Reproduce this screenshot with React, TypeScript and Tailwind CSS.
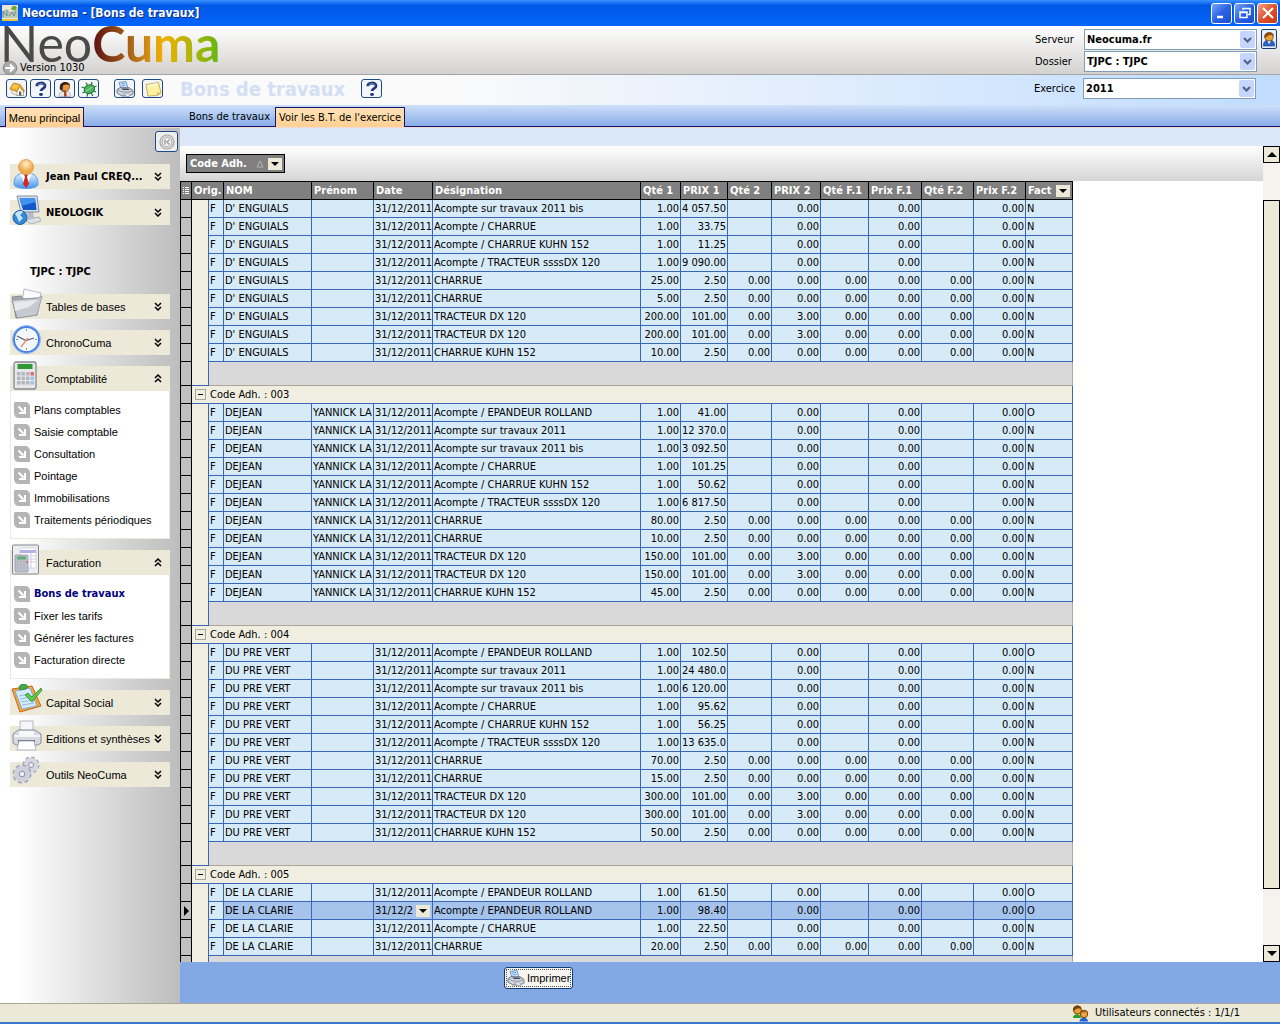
import React from "react";

type Row = {
  name: string;
  first: string;
  label: string;
  qty1: string;
  price1: string;
  second: boolean;
  price2: string;
  billed: string;
  selected?: boolean;
};

const line = (
  name: string,
  first: string,
  label: string,
  qty1: string,
  price1: string,
  second = false,
  price2 = "0.00",
  billed = "N",
): Row => ({ name, first, label, qty1, price1, second, price2, billed });

const member = (name: string, first: string, prices: string[], qty: string[]): Row[] => [
  line(name, first, "Acompte / EPANDEUR ROLLAND", "1.00", prices[0], false, "0.00", "O"),
  line(name, first, "Acompte sur travaux 2011", "1.00", prices[1]),
  line(name, first, "Acompte sur travaux 2011 bis", "1.00", prices[2]),
  line(name, first, "Acompte / CHARRUE", "1.00", prices[3]),
  line(name, first, "Acompte / CHARRUE KUHN 152", "1.00", prices[4]),
  line(name, first, "Acompte / TRACTEUR ssssDX 120", "1.00", prices[5]),
  line(name, first, "CHARRUE", qty[0], "2.50", true),
  line(name, first, "CHARRUE", qty[1], "2.50", true),
  line(name, first, "TRACTEUR DX 120", qty[2], "101.00", true, "3.00"),
  line(name, first, "TRACTEUR DX 120", qty[2], "101.00", true, "3.00"),
  line(name, first, "CHARRUE KUHN 152", qty[3], "2.50", true),
];

const groups: { code?: string; rows: Row[] }[] = [
  {
    rows: member(
      "D' ENGUIALS",
      "",
      ["", "", "4 057.50", "33.75", "11.25", "9 090.00"],
      ["25.00", "5.00", "200.00", "10.00"],
    ).slice(2),
  },
  {
    code: "003",
    rows: member(
      "DEJEAN",
      "YANNICK LA",
      ["41.00", "12 370.0", "3 092.50", "101.25", "50.62", "6 817.50"],
      ["80.00", "10.00", "150.00", "45.00"],
    ),
  },
  {
    code: "004",
    rows: member(
      "DU PRE VERT",
      "",
      ["102.50", "24 480.0", "6 120.00", "95.62", "56.25", "13 635.0"],
      ["70.00", "15.00", "300.00", "50.00"],
    ),
  },
  {
    code: "005",
    rows: [
      line("DE LA CLARIE", "", "Acompte / EPANDEUR ROLLAND", "1.00", "61.50", false, "0.00", "O"),
      {
        ...line("DE LA CLARIE", "", "Acompte / EPANDEUR ROLLAND", "1.00", "98.40", false, "0.00", "O"),
        selected: true,
      },
      line("DE LA CLARIE", "", "Acompte / CHARRUE", "1.00", "22.50"),
      line("DE LA CLARIE", "", "CHARRUE", "20.00", "2.50", true),
    ],
  },
];

/* ---------- Icons ---------- */

const HouseIcon = () => (
  <svg viewBox="0 0 16 16" className="size-4">
    <path d="M7 8l4-4 3.500 5v5.500H8z" fill="#fff" stroke="#8a8a8a" strokeWidth=".7" />
    <path d="M2 8l6 2v4.500L3 12.500z" fill="#eeeae0" stroke="#999" strokeWidth=".6" />
    <path d="M4.500 2L11 3.500 15.500 10l-1.300.6-3.700-5L8 10.500 .8 7.800z" fill="#f3b52c" stroke="#a96a08" strokeWidth=".7" />
    <path d="M3 5.500l5 1.300M4 3.800l5 1.200" stroke="#ffdc78" strokeWidth=".8" />
    <path d="M10 14.500V10.500h2.300v4z" fill="#6d5a48" />
  </svg>
);

const HelpIcon = () => (
  <svg viewBox="0 0 16 16" className="size-4" fill="none">
    <path d="M3.800 5.200C3.800 1 12 1 12 5c0 2.700-4 2.600-4 5" stroke="#1e3874" strokeWidth="2.800" />
    <path d="M4.500 4.500C5.500 1.800 11 2 11 5" stroke="#7f9ad0" strokeWidth=".8" />
    <ellipse cx="8" cy="13.500" rx="2" ry="1.400" fill="#1e3874" />
  </svg>
);

const OperatorIcon = () => (
  <svg viewBox="0 0 16 16" className="size-4">
    <path d="M2 15.500c0-4 2-5.500 6-5.500s5.500 1.500 5.500 5.500z" fill="#e9e6e2" stroke="#999" strokeWidth=".6" />
    <path d="M7.200 10.500h2l.5 5H7z" fill="#b33a1c" />
    <circle cx="8.200" cy="6" r="4.400" fill="#ef9440" stroke="#8a3c0c" strokeWidth=".6" />
    <path d="M3 6.500C2-.5 13.500-.5 13 5 11 3 6 3 5.500 6z" fill="#3a2012" />
    <rect x="2.800" y="5" width="3" height="4" rx="1" fill="#2a2a2a" />
    <path d="M4.500 9c1 1.500 2 1.500 4 1" fill="none" stroke="#333" />
  </svg>
);

const BugIcon = () => (
  <svg viewBox="0 0 16 16" className="size-4">
    <path
      d="M.5 6l4.500 1.500M1.500 12l3.500-2M5 1.500L7 5M11 1l-1 4M15.500 5l-4.500 2M15 11l-3.500-1.500M6 15.500l1-3.500M12 15l-2-3"
      stroke="#237337"
      strokeWidth="1.200"
    />
    <ellipse cx="8.300" cy="8.300" rx="5.300" ry="4.300" fill="#4cb560" stroke="#217336" transform="rotate(-20 8 8)" />
    <path d="M4.500 10.500l7-4.500" stroke="#9be2a6" strokeWidth=".9" />
  </svg>
);

const PrinterIcon = () => (
  <svg viewBox="0 0 18 16" className="h-4 w-[18px]">
    <path d="M3 1.500l7-1 2 7H5z" fill="#cfe6fb" stroke="#4f7fba" strokeWidth=".8" />
    <path d="M5 3l4-.6M5.500 5l4-.6" stroke="#6ba2dd" />
    <path d="M1 8.500l3-1.800h9l4 2.800v3.500l-4 2H6l-5-3z" fill="#d5d8df" stroke="#626b7d" strokeWidth=".9" />
    <path d="M1 8.500l5 2.500h7l4-1.500" fill="none" stroke="#8b93a3" />
    <path d="M5 7.500h7l2 1.500H7z" fill="#3b465c" />
    <path d="M7 13h6l1.500 1.300-3 1.200z" fill="#fff" stroke="#7b8494" strokeWidth=".5" />
  </svg>
);

const NoteIcon = () => (
  <svg viewBox="0 0 18 16" className="h-4 w-[18px]">
    <path d="M2 3.500L14.500 1.500 17 12l-4 2.500-9 .5z" fill="#fff1a0" stroke="#c7a640" strokeWidth=".9" />
    <path d="M17 12l-3.800-.8-.2 3.300z" fill="#d9b952" />
    <path d="M3.500 5L14 3" stroke="#fffbe0" strokeWidth="2" />
  </svg>
);

const PersonIcon = () => (
  <svg viewBox="0 0 16 18" className="h-[18px] w-4">
    <path d="M1.500 17c0-5 2.500-7 6.500-7s6.500 2 6.500 7z" fill="#2d62c9" stroke="#143b8c" strokeWidth=".7" />
    <path d="M6 10.500L8 15l2.500-4.500z" fill="#fff" />
    <circle cx="8" cy="6.500" r="4.700" fill="#f2a233" stroke="#5b3310" strokeWidth=".8" />
    <path d="M2.800 8C1 0 14 -1 13.500 6 10 2.500 7 6 2.800 8z" fill="#8b4c14" />
  </svg>
);

const UsersIcon = () => (
  <svg viewBox="0 0 17 17" className="size-[17px]">
    <path d="M1 13c0-5 8-5 8 0z" fill="#28a028" />
    <circle cx="5.500" cy="5" r="4" fill="#e9a13b" stroke="#764007" />
    <path d="M1 6C0-1 10-1 9 4 6 2 4 4 1 6z" fill="#73430f" />
    <path d="M7.500 16.500c0-5 8.500-5 8.500 0z" fill="#1f62d8" />
    <circle cx="12" cy="9" r="3.700" fill="#f0a43e" stroke="#764007" />
    <path d="M8 9c0-6 8-5 8-1-3-2-5-1-8 1z" fill="#9a5a18" />
  </svg>
);

const AppIcon = () => (
  <svg viewBox="0 0 16 16" className="size-4">
    <path d="M0 0h16v16H0z" fill="#e9e6d6" />
    <path d="M0 6l5-2 4 3 7-3v9H0z" fill="#b9c9b8" />
    <path d="M1 12V6l4 5V5m2 6l3-4 2 4 2-5" stroke="#768b93" fill="none" />
    <path d="M9 4c1-4 5-4 6-1-1 3-4 3-6 1z" fill="#6da43a" />
    <path d="M0 14h16v2H0z" fill="#e7c23c" />
  </svg>
);

const ManIcon = () => (
  <svg viewBox="0 0 30 32" className="h-8 w-[30px]">
    <defs>
      <linearGradient id="man-body" x2="0" y2="1">
        <stop stopColor="#e8f6ff" />
        <stop offset="1" stopColor="#3f93ee" />
      </linearGradient>
      <radialGradient id="man-head" cx=".5" cy=".3">
        <stop stopColor="#fff1c9" />
        <stop offset="1" stopColor="#f0a84b" />
      </radialGradient>
    </defs>
    <path d="M3 26c0-8 4-11 12-11s12 3 12 11c0 6-24 6-24 0z" fill="url(#man-body)" stroke="#5d9bea" />
    <path d="M9 15l6 4 6-4-6 14z" fill="#fff" />
    <path d="M13 16h4l-1 3 2 7-3 4-3-4 2-7z" fill="#d12626" />
    <circle cx="15" cy="9" r="7.500" fill="url(#man-head)" stroke="#e3953c" strokeWidth=".8" />
  </svg>
);

const ComputerIcon = () => (
  <svg viewBox="0 0 30 32" className="h-8 w-[30px]">
    <path d="M14 26l14-3 2 4-10 3z" fill="#dde1e5" stroke="#929aa4" strokeWidth=".7" />
    <path d="M16 17l6 0 1 7-6 1z" fill="#b4bcc5" />
    <path d="M6 2l20 0 2 16-18 0z" fill="#d8e1eb" stroke="#7d8ea4" />
    <path d="M8.500 4l15.500 0 1.600 12-13.600 0z" fill="#1457cb" />
    <path d="M8.500 4l15.500 0 .5 4-14 4z" fill="#4290f0" />
    <circle cx="9" cy="23.500" r="7" fill="#3789d7" stroke="#1e5fa8" />
    <path d="M4 20c3-4 7-3 8-2l-3 3 3 3-4 4-2-5z" fill="#c4e6f8" />
  </svg>
);

const FolderIcon = () => (
  <svg viewBox="0 0 32 32" className="size-8">
    <path d="M13 1l17 4-4 20-16-4z" fill="#fbfcfe" stroke="#a6abb6" strokeWidth=".8" />
    <path d="M1 9l9-1 2 3 15-1-1 17-21 3z" fill="#a5a8b3" stroke="#797d89" strokeWidth=".8" />
    <path d="M1 12l26-2 4-2-5 19-20 3z" fill="#c7cad3" stroke="#8c909c" strokeWidth=".8" />
    <path d="M3 14l24-2-9 7-14 4z" fill="#e7e9ef" />
  </svg>
);

const ClockIcon = () => (
  <svg viewBox="0 0 32 32" className="size-8">
    <circle cx="15.500" cy="15.500" r="12.800" fill="#f3f8ff" stroke="#4a82e4" strokeWidth="2.500" />
    <circle cx="15.500" cy="15.500" r="14" fill="none" stroke="#97bcf6" />
    <path d="M15.500 5v2M15.500 24v2M5 15.500h2M24 15.500h2" stroke="#7996c7" />
    <path d="M6 12l9 4.500 8-2.500" fill="none" stroke="#586579" strokeWidth="1.300" />
    <path d="M17 14l-7 9" stroke="#f08a5e" strokeWidth="1.300" />
  </svg>
);

const Keypad = ({ x, y, s }: { x: number; y: number; s: number }) => (
  <g>
    {[0, 1, 2].map((r) =>
      [0, 1, 2, 3].map((c) => (
        <rect
          key={`${r}${c}`}
          x={x + c * s}
          y={y + r * s}
          width={s - 1}
          height={s - 1}
          rx=".6"
          fill={c === 3 ? (r === 0 ? "#e26a6a" : "#9fc3e4") : "#b3b6bd"}
        />
      )),
    )}
  </g>
);

const CalculatorIcon = () => (
  <svg viewBox="0 0 30 32" className="h-8 w-[30px]">
    <rect x="3" y="2" width="22" height="27" rx="2" fill="#e6e7ea" stroke="#85888f" strokeWidth="1.300" />
    <rect x="6.500" y="4" width="15" height="5" fill="#2f9a35" />
    <Keypad x={6} y={12} s={4.500} />
  </svg>
);

const InvoiceIcon = () => (
  <svg viewBox="0 0 30 32" className="h-8 w-[30px]">
    <rect x="1.500" y="1" width="26" height="29" rx="1" fill="#eeeef2" stroke="#85868d" />
    <path d="M9 4h16v20H9z" fill="#fff" stroke="#c8c8dc" strokeWidth=".7" />
    <path d="M9 6h16v3H9z" fill="#b7b0e4" />
    <path d="M18 12h7M18 15h7M18 18h7M20 9v15" stroke="#cfcfe4" />
    <rect x="4" y="11" width="13" height="17" rx="1" fill="#bdc0cc" stroke="#8b8e9c" strokeWidth=".7" />
    <path d="M6 12.500h9v3H6z" fill="#5fae79" />
    <Keypad x={6} y={17} s={3} />
  </svg>
);

const ClipboardIcon = () => (
  <svg viewBox="0 0 32 32" className="size-8">
    <path d="M1 5l20-3 9 20-21 6z" fill="#f5a540" stroke="#c36b16" />
    <path d="M4 7l15-3 7 18-15 3z" fill="#d5eafa" stroke="#7eadd5" strokeWidth="1" />
    <path d="M8 12l10-2M9 15l11-2M10 18l12-2M11 21l12-2" stroke="#91bce2" />
    <path d="M8 4c0-5 8-5 9-1l-2 2-6 1z" fill="#44a94b" stroke="#257b2b" strokeWidth=".7" />
    <path d="M14 11l3-2 4 4L30 4l1 2-10 12z" fill="#5ac94c" stroke="#2b8d27" strokeWidth=".8" />
  </svg>
);

const BigPrinterIcon = () => (
  <svg viewBox="0 0 32 32" className="size-8">
    <path d="M9 1h13v13H9z" fill="#f4f6fb" stroke="#a4a9b8" strokeWidth=".8" />
    <path d="M2 14l5-4h17l6 4v9l-3 2H5l-3-2z" fill="#d6d8e2" stroke="#8b8e9f" />
    <path d="M8 11h15v4H8z" fill="#f6f8fb" />
    <path d="M3 16h26" stroke="#fff" strokeWidth="1.500" />
    <path d="M7 20h17v3H7z" fill="#686c7d" />
    <path d="M8 21h15l2 9H6z" fill="#fff" stroke="#a2a6b4" strokeWidth=".8" />
  </svg>
);

const GearsIcon = () => (
  <svg viewBox="0 0 32 32" className="size-8" fill="none">
    <circle cx="20" cy="9" r="7" stroke="#a6a7b8" strokeWidth="3" strokeDasharray="3.300 2.200" />
    <circle cx="20" cy="9" r="5" stroke="#d5d6e2" strokeWidth="4.500" />
    <circle cx="20" cy="9" r="2.500" stroke="#8e90a2" fill="#efeff4" />
    <circle cx="11" cy="18" r="8" stroke="#9fa0b2" strokeWidth="3" strokeDasharray="3.800 2.500" />
    <circle cx="11" cy="18" r="5.500" stroke="#cfd0de" strokeWidth="5.500" />
    <circle cx="11" cy="18" r="2.800" stroke="#8e90a2" fill="#efeff4" />
  </svg>
);

const DoubleChevron = ({ up }: { up?: boolean }) => (
  <svg viewBox="0 0 8 9" className="h-[9px] w-2" fill="none" stroke="#000" strokeWidth="1.500">
    {up ? <path d="M1 4l3-3 3 3M1 8l3-3 3 3" /> : <path d="M1 1l3 3 3-3M1 5l3 3 3-3" />}
  </svg>
);

const ItemArrow = () => (
  <svg viewBox="0 0 16 16" className="size-4">
    <path d="M1 0h10c3 0 5 2 5 5v11H5c-3 0-5-2-5-5V1z" fill="#b5b5b5" />
    <path d="M4.500 4.500l5 5M11 5v6H5" stroke="#fff" strokeWidth="2" fill="none" />
  </svg>
);

const DropArrow = () => (
  <span className="flex h-3 w-[14px] shrink-0 items-center justify-center bg-[#ece9d8]">
    <svg viewBox="0 0 8 4" className="h-1 w-2">
      <path d="M0 0h8L4 4z" />
    </svg>
  </span>
);

/* ---------- Window chrome ---------- */

const WindowButton = ({ label, close, children }: { label: string; close?: boolean; children: React.ReactNode }) => (
  <button
    aria-label={label}
    className={`flex size-[21px] items-center justify-center rounded-[3px] border border-white ${
      close ? "bg-linear-to-br from-[#f0a080] via-[#e0502c] to-[#c43c14]" : "bg-linear-to-br from-[#7ba4f4] via-[#2a61e4] to-[#1c4fd0]"
    }`}
  >
    <svg viewBox="0 0 16 16" className="size-4" fill="none" stroke="#fff">
      {children}
    </svg>
  </button>
);

const TitleBar = () => (
  <header className="flex h-[26px] shrink-0 items-center gap-1 bg-linear-to-b from-[#3a93ff] via-[#0058e8] via-20% to-[#0465fb] pr-0.5 pl-0.5 text-white">
    <AppIcon />
    <h1 className="grow text-xs font-bold [text-shadow:1px_1px_#0a2a80]">Neocuma - [Bons de travaux]</h1>
    <div className="flex gap-0.5">
      <WindowButton label="Réduire">
        <path d="M3 12h6" strokeWidth="2.500" />
      </WindowButton>
      <WindowButton label="Restaurer">
        <path d="M6 5V3.500h7v6h-2M3 7h7v5.500H3zM3 7.500h7" strokeWidth="1.500" />
      </WindowButton>
      <WindowButton label="Fermer" close>
        <path d="M3 3l10 10M13 3L3 13" strokeWidth="2" />
      </WindowButton>
    </div>
  </header>
);

const Field = ({ id, label, value }: { id: string; label: string; value: string }) => (
  <div className="flex items-center">
    <label htmlFor={id} className="w-[49px]">
      {label}
    </label>
    <div className="relative">
      <select
        id={id}
        className="block h-[21px] w-[173px] appearance-none border border-[#7f9db9] bg-white pr-5 pl-0.5 font-bold"
        defaultValue={value}
      >
        <option>{value}</option>
      </select>
      <span className="pointer-events-none absolute top-0.5 right-0.5 flex h-[17px] w-[15px] items-center justify-center rounded-xs bg-[#c5d5fb]">
        <svg viewBox="0 0 9 6" className="h-1.5 w-[9px]" fill="none" stroke="#4d6185" strokeWidth="2">
          <path d="M1 1l3.500 3.500L8 1" />
        </svg>
      </span>
    </div>
  </div>
);

const Banner = () => (
  <div className="flex h-[49px] shrink-0 justify-between border-b border-[#a5a5a5] bg-linear-to-b from-white to-[#d4d2d0]">
    <div className="flex flex-col justify-between">
      <p className="font-['Lato'] text-[50px] leading-[35px] whitespace-nowrap">
        <span className="text-[#4a4a4a]">Neo</span>
        <span className="bg-linear-to-r from-[#5a0d10] via-[#f0b000] via-55% to-[#5fb510] bg-clip-text font-bold text-transparent">
          Cuma
        </span>
      </p>
      <p className="flex h-[13px] items-center gap-0.5 pl-0.5">
        <svg viewBox="0 0 16 16" className="size-4" fill="none">
          <circle cx="8" cy="8" r="6.800" fill="#aaa" stroke="#888" />
          <path d="M3.500 8h8M8 4.500L11.500 8 8 11.500" stroke="#fff" strokeWidth="2" />
        </svg>
        Version 1030
      </p>
    </div>
    <div className="flex gap-1 pt-[3px] pr-[3px]">
      <div className="flex flex-col gap-px">
        <Field id="server" label="Serveur" value="Neocuma.fr" />
        <Field id="folder" label="Dossier" value="TJPC : TJPC" />
      </div>
      <button
        aria-label="Utilisateur"
        className="flex h-5 w-4 items-center justify-center overflow-hidden rounded-xs border border-[#1c3c74] bg-[#e3f0fb]"
      >
        <PersonIcon />
      </button>
    </div>
  </div>
);

const ToolButton = ({ label, children }: { label: string; children: React.ReactNode }) => (
  <button
    aria-label={label}
    className="flex h-[19px] w-[21px] items-center justify-center rounded-[3px] border border-[#1d4a86] bg-[#f2f5fa]"
  >
    {children}
  </button>
);

const Toolbar = () => (
  <div className="flex h-[30px] shrink-0 items-center bg-linear-to-r from-[#fafafa] from-35% to-[#bfdcff] pr-6 pb-[3px] pl-1.5">
    <div className="flex w-[174px] gap-[3px]">
      <ToolButton label="Accueil">
        <HouseIcon />
      </ToolButton>
      <ToolButton label="Aide">
        <HelpIcon />
      </ToolButton>
      <ToolButton label="Assistance">
        <OperatorIcon />
      </ToolButton>
      <ToolButton label="Signaler">
        <BugIcon />
      </ToolButton>
      <div className="ml-3 flex gap-[7px]">
        <ToolButton label="Imprimer la page">
          <PrinterIcon />
        </ToolButton>
        <ToolButton label="Notes">
          <NoteIcon />
        </ToolButton>
      </div>
    </div>
    <h2 className="mr-4 text-xl font-bold text-[#d3dff3]">Bons de travaux</h2>
    <div className="grow">
      <ToolButton label="Aide sur la page">
        <HelpIcon />
      </ToolButton>
    </div>
    <Field id="year" label="Exercice" value="2011" />
  </div>
);

const activeTab =
  "h-5 border border-b-0 border-[#14146e] bg-linear-to-b from-[#ffe3b8] to-[#ffcf92] whitespace-nowrap pt-px";

const TabBar = () => (
  <nav className="flex h-[23px] shrink-0 items-end border-b border-[#f3d9d4] bg-linear-to-b from-[#cfe0fa] to-[#86abe6]">
    <span className="h-px w-[5px] bg-[#14146e]" />
    <button className={`${activeTab} w-[79px] font-['Liberation_Sans']`}>Menu principal</button>
    <span className="h-px w-[99px] bg-[#14146e]" />
    <button className="h-5 border-b border-[#14146e] pt-px pr-[5px] pl-1.5 whitespace-nowrap">Bons de travaux</button>
    <button className={`${activeTab} px-[3px]`}>Voir les B.T. de l'exercice</button>
    <span className="h-px grow bg-[#14146e]" />
  </nav>
);

/* ---------- Sidebar ---------- */

const MenuSection = ({
  icon,
  title,
  bold,
  items,
  active,
}: {
  icon: React.ReactNode;
  title: string;
  bold?: boolean;
  items?: string[];
  active?: string;
}) => (
  <section>
    <button
      className={`relative flex h-[25px] w-full items-center bg-[#ece9d8] pr-2 pl-9 text-left ${
        bold ? "font-bold" : "font-['Liberation_Sans']"
      }`}
    >
      <span className="absolute -top-1.5 left-px">{icon}</span>
      <span className="grow whitespace-nowrap">{title}</span>
      <DoubleChevron up={!!items} />
    </button>
    {items && (
      <ul className="border border-t-0 border-[#ece9e4] bg-white pt-2 pb-[7px] pl-[3px]">
        {items.map((item) => (
          <li key={item}>
            <a
              href="#"
              className={`flex h-[22px] items-center gap-1 whitespace-nowrap ${
                item === active ? "font-bold text-[#000080]" : "font-['Liberation_Sans']"
              }`}
            >
              <ItemArrow />
              {item}
            </a>
          </li>
        ))}
      </ul>
    )}
  </section>
);

const Sidebar = () => (
  <aside className="w-[180px] shrink-0 overflow-hidden bg-linear-to-r from-white from-10% to-[#bdbdbd] px-[10px] pt-[3px]">
    <div className="-mr-2 flex justify-end">
      <button
        aria-label="Replier le menu"
        className="flex h-[21px] w-[23px] items-center justify-center rounded-[3px] border border-[#1d4a86] bg-[#eeeeee]"
      >
        <svg viewBox="0 0 16 16" className="size-4" fill="none" stroke="#a2a2a2">
          <circle cx="8" cy="8" r="7" strokeWidth="1.200" />
          <circle cx="8" cy="8" r="5" />
          <path d="M6 5.500v5M10.500 5.500L8 8l2.500 2.500" strokeWidth="1.500" />
        </svg>
      </button>
    </div>
    <div className="mt-3 flex flex-col gap-[11px]">
      <MenuSection icon={<ManIcon />} title="Jean Paul CREQ..." bold />
      <MenuSection icon={<ComputerIcon />} title="NEOLOGIK" bold />
      <p className="flex h-[47px] items-end pb-1 pl-5 font-bold">TJPC : TJPC</p>
      <MenuSection icon={<FolderIcon />} title="Tables de bases" />
      <MenuSection icon={<ClockIcon />} title="ChronoCuma" />
      <MenuSection
        icon={<CalculatorIcon />}
        title="Comptabilité"
        items={[
          "Plans comptables",
          "Saisie comptable",
          "Consultation",
          "Pointage",
          "Immobilisations",
          "Traitements périodiques",
        ]}
      />
      <MenuSection
        icon={<InvoiceIcon />}
        title="Facturation"
        items={["Bons de travaux", "Fixer les tarifs", "Générer les factures", "Facturation directe"]}
        active="Bons de travaux"
      />
      <MenuSection icon={<ClipboardIcon />} title="Capital Social" />
      <MenuSection icon={<BigPrinterIcon />} title="Editions et synthèses" />
      <MenuSection icon={<GearsIcon />} title="Outils NeoCuma" />
    </div>
  </aside>
);

/* ---------- Grid ---------- */

const headings = [
  "NOM",
  "Prénom",
  "Date",
  "Désignation",
  "Qté 1",
  "PRIX 1",
  "Qté 2",
  "PRIX 2",
  "Qté F.1",
  "Prix F.1",
  "Qté F.2",
  "Prix F.2",
];

const Marker = ({ children }: { children?: React.ReactNode }) => (
  <td className="border-r border-b border-l border-black bg-[#c0c0c0] p-0">{children}</td>
);

const Cell = ({ children, right, selected }: { children?: React.ReactNode; right?: boolean; selected?: boolean }) => (
  <td className={`border-r border-b border-[#3a66b8] p-0 ${selected ? "bg-[#a6c3ec]" : "bg-[#d7eaf7]"}`}>
    <div className={`ml-px overflow-hidden whitespace-nowrap ${right ? "pr-px text-right" : ""}`}>{children}</div>
  </td>
);

const DataRow = ({ row }: { row: Row }) => {
  const s = row.selected;
  const optional = row.second ? "0.00" : "";
  return (
    <tr className="h-[18px]">
      <Marker>
        {s && (
          <svg viewBox="0 0 10 10" className="h-2.5 w-full">
            <path d="M3 0l5 5-5 5z" />
          </svg>
        )}
      </Marker>
      <td className="border-r border-[#3a66b8] bg-[#f0eee0] p-0" />
      <Cell>F</Cell>
      <Cell selected={s}>{row.name}</Cell>
      <Cell selected={s}>{row.first}</Cell>
      <Cell selected={s}>
        {s ? (
          <span className="flex items-center justify-between pr-0.5">
            31/12/2
            <DropArrow />
          </span>
        ) : (
          "31/12/2011"
        )}
      </Cell>
      <Cell selected={s}>{row.label}</Cell>
      <Cell selected={s} right>{row.qty1}</Cell>
      <Cell selected={s} right>{row.price1}</Cell>
      <Cell selected={s} right>{optional}</Cell>
      <Cell selected={s} right>{row.price2}</Cell>
      <Cell selected={s} right>{optional}</Cell>
      <Cell selected={s} right>0.00</Cell>
      <Cell selected={s} right>{optional}</Cell>
      <Cell selected={s} right>0.00</Cell>
      <Cell selected={s}>{row.billed}</Cell>
    </tr>
  );
};

const headCell = "border-t border-r border-b border-black bg-[#808080] p-0 pl-0.5 text-left font-bold whitespace-nowrap";

const Grid = () => (
  <table className="w-[893px] table-fixed border-separate border-spacing-0 leading-[17px]">
    <colgroup>
      <col className="w-3" />
      <col className="w-[17px]" />
      <col className="w-[15px]" />
      <col className="w-[88px]" />
      <col className="w-[62px]" />
      <col className="w-[59px]" />
      <col className="w-[208px]" />
      <col className="w-10" />
      <col className="w-[47px]" />
      <col className="w-11" />
      <col className="w-[49px]" />
      <col className="w-12" />
      <col className="w-[53px]" />
      <col className="w-[52px]" />
      <col className="w-[52px]" />
      <col className="w-[47px]" />
    </colgroup>
    <thead>
      <tr className="h-[19px] text-white">
        <th className="border border-black bg-[#808080] p-0">
          <svg viewBox="0 0 10 10" className="h-2.5 w-full" stroke="#fff">
            <path d="M2 1.500h1M4 1.500h4M2 3.500h1M4 3.500h4M2 5.500h1M4 5.500h4M2 7.500h1M4 7.500h4" />
          </svg>
        </th>
        <th colSpan={2} className={headCell}>
          Orig.
        </th>
        {headings.map((h) => (
          <th key={h} className={headCell}>
            {h}
          </th>
        ))}
        <th className={headCell}>
          <span className="flex items-center justify-between pr-0.5">
            Fact
            <DropArrow />
          </span>
        </th>
      </tr>
    </thead>
    {groups.map((group, i) => (
      <tbody key={i}>
        {group.code && (
          <tr className="h-[18px]">
            <Marker />
            <td colSpan={15} className="border-r border-b border-[#3a66b8] bg-[#f0eee0] p-0">
              <span className="flex items-center gap-1 pl-[3px]">
                <button
                  aria-label={`Replier ${group.code}`}
                  className="flex size-[11px] items-center justify-center border border-[#aca899] bg-[#f0eee0]"
                >
                  <span className="h-px w-[5px] bg-black" />
                </button>
                Code Adh. : {group.code}
              </span>
            </td>
          </tr>
        )}
        {group.rows.map((row, j) => (
          <DataRow key={j} row={row} />
        ))}
        <tr className="h-6">
          <Marker />
          <td className="border-r border-b border-[#3a66b8] bg-[#f0eee0] p-0" />
          <td colSpan={14} className="border-r border-b border-[#aca899] bg-[#d9d9d9] p-0" />
        </tr>
      </tbody>
    ))}
  </table>
);

const ScrollButton = ({ label, d }: { label: string; d: string }) => (
  <button
    aria-label={label}
    className="flex h-[17px] w-full shrink-0 items-center justify-center border border-black bg-[#ece9d8]"
  >
    <svg viewBox="0 0 10 5" className="h-[5px] w-2.5">
      <path d={d} />
    </svg>
  </button>
);

const Main = () => (
  <main className="flex min-w-0 grow flex-col">
    <div className="h-[18px] shrink-0 bg-[#dbe8fa]" />
    <div className="flex min-h-0 grow bg-white">
      <div className="flex min-w-0 grow flex-col overflow-hidden">
        <div className="flex h-[35px] shrink-0 items-center bg-linear-to-b from-white to-[#d6d5d5] pl-1.5">
          <button className="flex h-[19px] w-[99px] items-center border border-black bg-[#808080] pr-0.5 pl-[3px] font-bold text-white">
            <span className="grow text-left">Code Adh.</span>
            <svg viewBox="0 0 8 8" className="mr-1 size-2" fill="none" stroke="#b4b4b4">
              <path d="M4 1L1 7h6z" />
            </svg>
            <DropArrow />
          </button>
        </div>
        <div className="min-h-0 grow overflow-hidden">
          <Grid />
        </div>
      </div>
      <div className="flex w-[17px] shrink-0 flex-col bg-[#f4f3ee]">
        <ScrollButton label="Défiler vers le haut" d="M0 5l5-5 5 5z" />
        <div className="grow pt-[37px]">
          <div className="h-[92.5%] border border-black bg-[#ece9d8]" />
        </div>
        <ScrollButton label="Défiler vers le bas" d="M0 0h10L5 5z" />
      </div>
    </div>
    <div className="h-[41px] shrink-0 bg-[#82a9e4] pt-[5px] pl-[324px]">
      <button className="flex h-[22px] items-center rounded-[3px] border border-[#123a75] bg-[#f6f5f0] p-px whitespace-nowrap">
        <span className="flex h-full items-center gap-0.5 border border-dotted border-[#555] font-['Liberation_Sans']">
          <PrinterIcon />
          Imprimer
        </span>
      </button>
    </div>
  </main>
);

export default function App() {
  return (
    <div className="flex h-screen flex-col overflow-hidden bg-white font-['DejaVu_Sans_Condensed','DejaVu_Sans',sans-serif] text-[11px] leading-[14px] text-black">
      <TitleBar />
      <Banner />
      <Toolbar />
      <TabBar />
      <div className="flex min-h-0 grow">
        <Sidebar />
        <Main />
      </div>
      <footer className="flex h-[21px] shrink-0 items-center justify-end gap-1.5 border-t border-b-2 border-t-[#aca899] border-b-[#3a78d0] bg-[#ece9d8] pr-10">
        <UsersIcon />
        Utilisateurs connectés : 1/1/1
      </footer>
    </div>
  );
}
